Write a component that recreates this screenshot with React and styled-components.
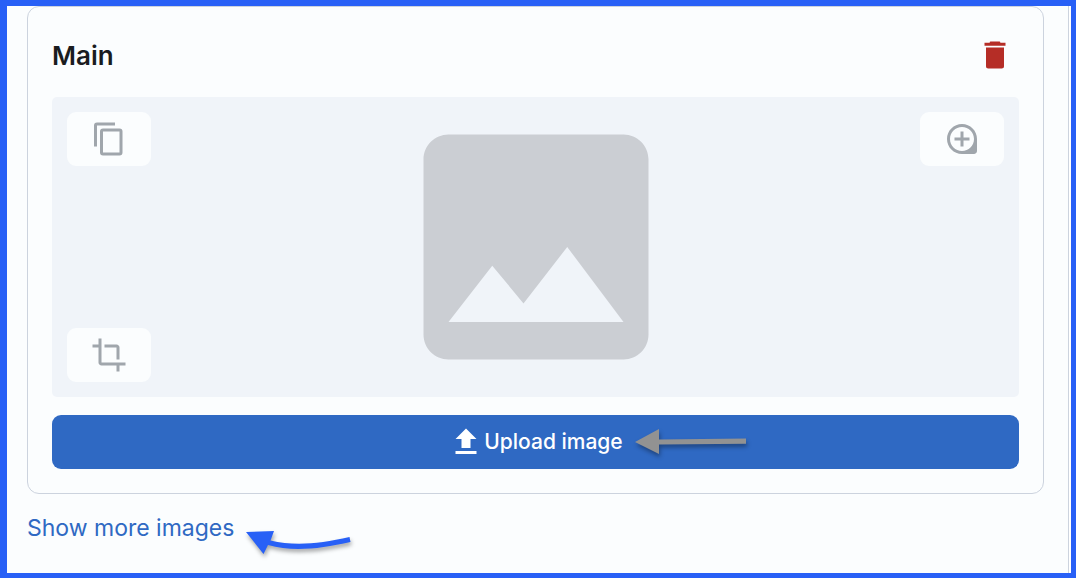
import styled, { createGlobalStyle } from 'styled-components'
import { MdCrop, MdFileUpload, MdImage, MdLoupe } from 'react-icons/md'


export default function App() {

  return (
    <>
      <GlobalStyle />
      <Frame>
        <Panel>
          <Card>
            <CardHeader>
              <Title>Main</Title>
              <DeleteButton type="button" aria-label="Delete image">
                <TrashIcon />
              </DeleteButton>
            </CardHeader>

            <Preview>
              <ToolColumn>
                <ToolButton type="button" aria-label="Copy"><CopyIcon /></ToolButton>
                <ToolButton type="button" aria-label="Crop"><MdCrop /></ToolButton>
              </ToolColumn>
              <Placeholder />
              <ToolColumn>
                <ToolButton type="button" aria-label="Zoom"><MdLoupe /></ToolButton>
              </ToolColumn>
            </Preview>

            <UploadButton type="button">
              <MdFileUpload />
              <Anchor>
                Upload image
                <GrayArrow />
              </Anchor>
            </UploadButton>
          </Card>

          <MoreLink href="#more">
            Show more images
            <BlueArrow />
          </MoreLink>
        </Panel>
      </Frame>
    </>
  )
}

function TrashIcon() {
  return (
    <svg viewBox="0 0 24 24" width="36" height="36" fill="currentColor" aria-hidden="true">
      <path d="M6 19.500c0 .9.600 1.500 1.500 1.500h9c.9 0 1.500-.6 1.500-1.500V7H6v12.500zM19 3.800h-3.500v-.4c0-.3-.2-.4-.5-.4H9c-.3 0-.5.100-.5.400v.4H5v2h14v-2z" />
    </svg>
  )
}

function CopyIcon() {
  return (
    <svg viewBox="0 0 24 24" fill="none" stroke="currentColor" strokeWidth="2" aria-hidden="true">
      <path d="M16 2H4a1 1 0 0 0-1 1v14" />
      <rect x="7" y="6" width="13" height="16" rx="1" />
    </svg>
  )
}

function GrayArrow() {
  return (
    <Pointer $top="-4px" width="116" height="36" viewBox="0 0 116 36" aria-hidden="true">
      <path fill="#929292" d="M0 19 24 6v10.500l87-1v5.200l-87 .8V31z" />
    </Pointer>
  )
}

function BlueArrow() {
  return (
    <Pointer $top="13px" width="112" height="36" viewBox="0 0 112 36" aria-hidden="true">
      <path fill="#2860f6" d="M0 9 28 8l-3.500 9.500C48 23 73 21 103.500 14l1 5C74 26 46 29 22 22l-4.500 9z" />
    </Pointer>
  )
}


const GlobalStyle = createGlobalStyle`
  * {
    box-sizing: border-box;
  }

  body {
    margin: 0;
    font-family: Inter, "Liberation Sans", sans-serif;
  }

  button {
    font-family: inherit;
    border: 0;
    padding: 0;
    cursor: pointer;
  }
`

const Frame = styled.div`
  display: flex;
  min-height: 100vh;
  padding-right: 2px;
  background: white;
  border: solid #2860f6;
  border-width: 6px 5px 5px 7px;
`

const Panel = styled.main`
  flex: 1;
  display: flex;
  flex-direction: column;
  align-items: flex-start;
  gap: 16px;
  padding: 0 24px 0 20px;
  background: #fbfdfe;
  border-right: 1px solid #ccd3de;
`

const Card = styled.section`
  align-self: stretch;
  display: flex;
  flex-direction: column;
  gap: 18px;
  padding: 24px;
  border: 1px solid #ccd3de;
  border-radius: 12px;
`

const CardHeader = styled.header`
  display: flex;
  align-items: center;
  justify-content: space-between;
`

const Title = styled.h2`
  margin: 0;
  padding-top: 2px;
  font-size: 26px;
  line-height: 36px;
  font-weight: 600;
  color: #1a1c1e;
`

const DeleteButton = styled.button`
  display: flex;
  align-items: center;
  justify-content: center;
  width: 48px;
  height: 48px;
  background: transparent;
  color: #b52d26;
`

const Preview = styled.div`
  display: flex;
  justify-content: space-between;
  height: 300px;
  padding: 0 15px;
  background: #f0f4f9;
  border-radius: 5px;
`

const ToolColumn = styled.div`
  display: flex;
  flex-direction: column;
  justify-content: space-between;
  padding: 15px 0;
`

const ToolButton = styled.button`
  display: flex;
  align-items: center;
  justify-content: center;
  width: 84px;
  height: 54px;
  background: #fbfdfe;
  border-radius: 9px;
  color: #a0a6ac;

  svg {
    width: 36px;
    height: 36px;
  }
`

const Placeholder = styled(MdImage)`
  width: 300px;
  height: 300px;
  color: #cbced3;
`

const UploadButton = styled.button`
  display: flex;
  align-items: center;
  justify-content: center;
  height: 54px;
  background: #2f69c3;
  border-radius: 9px;
  color: white;
  font-size: 21px;
  line-height: 30px;
  font-weight: 500;

  > svg {
    width: 36px;
    height: 36px;
  }
`

const Anchor = styled.span`
  position: relative;
`

const MoreLink = styled.a`
  position: relative;
  font-size: 23px;
  line-height: 36px;
  color: #2f69c3;
  text-decoration: none;
`

/* callout arrow, floats right of the text it points to */
const Pointer = styled.svg`
  position: absolute;
  left: 100%;
  top: ${({ $top }) => $top};
  margin-left: 12px;
  filter: drop-shadow(1px 3px 2px rgba(0, 0, 0, 0.35));
  pointer-events: none;
`
